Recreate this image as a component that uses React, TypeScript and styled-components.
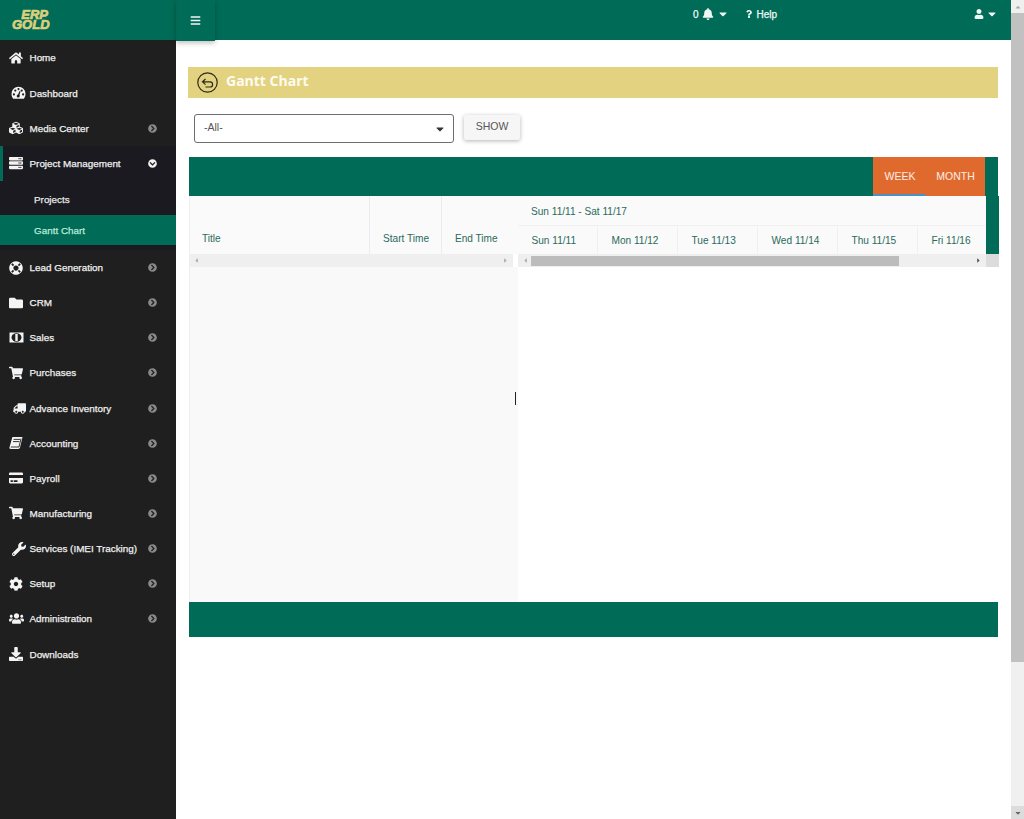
import React from "react";
import styled, { createGlobalStyle } from "styled-components";
import {
  FaHome, FaCubes, FaServer, FaLifeRing, FaFolder, FaShoppingCart,
  FaTruck, FaCreditCard, FaWrench, FaCog, FaUsers, FaDownload, FaChevronCircleRight,
  FaChevronCircleDown, FaBell, FaCaretDown, FaQuestion, FaUser, FaBars, FaCaretLeft, FaCaretRight, FaCaretUp,
} from "react-icons/fa";

const GREEN = "#006b56";
const Global = createGlobalStyle`
  html, body { margin: 0; padding: 0; height: 100%; overflow: hidden; background: #fff; }
  body { font-family: "Liberation Sans", Arial, sans-serif; }
  * { box-sizing: border-box; }
`;
const Page = styled.div`display: flex; width: 1024px; height: 819px; overflow: hidden;`;
const Viewport = styled.div`flex: 1; min-width: 0; display: flex; flex-direction: column;`;
const Header = styled.header`display: flex; height: 40px; background: ${GREEN}; color: #fff; flex: none;`;
const LogoBox = styled.div`width: 176px; flex: none; padding: 10px 0 0 12px;`;
const Logo = styled.div`
  width: 36px; font: italic 900 13px/10px "Liberation Sans", Arial, sans-serif; text-align: right;
  color: #dccf7c; letter-spacing: 0; -webkit-text-stroke: 0.7px #dccf7c;
`;
const Toggle = styled.button`
  width: 39px; height: 41px; border: 0; padding: 0 2px 0 0; background: ${GREEN}; color: #f2f7f5; font-size: 11px;
  display: flex; align-items: center; justify-content: center; box-shadow: 0 2px 5px rgba(0,0,0,.25); position: relative;
  border-left: 1px solid #0a6450;
`;
const HeaderNav = styled.nav`flex: 1; display: flex; align-items: center; padding: 0 13px 12px 478px; font-size: 10px; -webkit-text-stroke: 0.25px #f1f7f5;`;
const NavItem = styled.span`display: inline-flex; align-items: center; gap: ${p => p.$gap ?? 3}px; margin-right: ${p => p.$mr ?? 0}px; color: #f1f7f5;`;
const Spacer = styled.span`flex: 1;`;
const Body = styled.div`flex: 1; display: flex; min-height: 0;`;
const Sidebar = styled.aside`width: 176px; flex: none; background: #1f1f1f; padding-top: 0.3px;`;
const MenuItem = styled.div`
  position: relative; height: 35.15px; display: flex; align-items: center; padding: 0 18px 0 9px; color: #f0f0f0;
  font-size: 9.9px;
  -webkit-text-stroke: 0.25px #f0f0f0;
  background: ${p => p.$open ? "#1a1a20" : "transparent"};
  ${p => p.$open ? `&::before { content: ""; position: absolute; left: 0; top: 0; bottom: 0; width: 3px; background: ${GREEN}; }` : ""}
`;
const IconSlot = styled.span`width: 20.5px; flex: none; display: flex; justify-content: ${p => p.$end ? "flex-end" : "flex-start"}; font-size: 14px; color: #f4f4f4; padding-right: ${p => p.$end ? "3.5px" : 0};`;
const FlippedTruck = styled(FaTruck)`transform: scaleX(-1); font-size: 13px;`;
const Label = styled.span`flex: 1; white-space: nowrap;`;
const Chevron = styled.span`font-size: 9px; display: flex; color: ${p => p.$open ? "#f2f2f2" : "#8a8a8a"}; margin-right: 1px;`;
const SubMenu = styled.div`background: #1a1a20;`;
const SubItem = styled.div`
  height: ${p => p.$h}px; display: flex; align-items: center; padding: ${p => p.$pt}px 0 0 34px; font-size: 9.9px;
  color: ${p => p.$active ? "#b9ead9" : "#e8e8e8"}; background: ${p => p.$active ? GREEN : "transparent"};
  -webkit-text-stroke: 0.25px currentColor;
`;
const SubEnd = styled.div`height: 4.7px; background: #1a1a20;`;
const Main = styled.main`flex: 1; min-width: 0; padding: 27px 13px 0 12px; background: #fff;`;
const TitleBar = styled.div`height: 31px; background: #e3d27f; display: flex; align-items: center; padding-left: 9px; gap: 8px;`;
const Title = styled.h1`margin: -5px 0 0; color: #fdfcf0; font: bold 14px "Open Sans", sans-serif;`;
const Filters = styled.div`display: flex; align-items: flex-start; margin: 16px 0 0 6px; height: 43px; gap: 10px;`;
const Select = styled.div`
  width: 260px; height: 29px; border: 1px solid #6e6e6e; border-radius: 3px; display: flex; align-items: center;
  justify-content: space-between; padding: 0 7px 0 9px; font-size: 10.5px; color: #555;
`;
const SelectText = styled.span`margin-top: -4px;`;
const ShowButton = styled.button`
  width: 56px; height: 25px; margin-top: 1px; border: 0; border-radius: 2px; background: #f6f6f6; color: #555; font: 10.5px "Liberation Sans", sans-serif;
  box-shadow: 0 1px 4px rgba(0,0,0,.3); padding: 0 0 3px;
`;
const Gantt = styled.section`margin: 0 0 0 1px; width: 809px;`;
const Toolbar = styled.div`height: 39px; background: ${GREEN}; display: flex; justify-content: flex-end; padding-right: 13px;`;
const ViewTabs = styled.div`width: 112px; background: #e06a2e; display: flex; color: #fbeee6; font-size: 10.5px;`;
const ViewTab = styled.div`
  width: ${p => p.$w}px; display: flex; align-items: center; justify-content: center; padding-left: ${p => p.$pl ?? 0}px;
  border-bottom: 2px solid ${p => p.$active ? "#4a90c8" : "transparent"};
`;
const Grid = styled.div`display: grid; grid-template-columns: 329px 481px; grid-template-rows: 58px 13px 335px;`;
const LeftHead = styled.div`display: grid; grid-template-columns: 180px 72px 77px; background: #fafafa; border-left: 1px solid #eee;`;
const HeadCell = styled.div`
  display: flex; align-items: flex-end; padding: 0 0 10px ${p => p.$pl ?? 13}px; color: #2a6a5c; font-size: 10.1px; white-space: nowrap;
  border-right: ${p => p.$last ? "0" : "1px solid #ececec"};
`;
const RightHead = styled.div`display: flex; background: #fafafa;`;
const Timeline = styled.div`width: 468px; overflow: hidden; display: flex; flex-direction: column;`;
const GroupRow = styled.div`height: 30px; padding: 1px 13px 0; display: flex; align-items: center; color: #2a6a5c; font-size: 10.1px; border-bottom: 1px solid #f0f0f0;`;
const DayRow = styled.div`flex: 1; display: flex;`;
const DayCell = styled.div`
  width: 80px; flex: none; padding-left: 13.5px; display: flex; align-items: center; color: #2a6a5c; font-size: 10.1px; white-space: nowrap;
  border-right: 1px solid #f0f0f0;
`;
const GreenStrip = styled.div`width: 13px; background: ${GREEN};`;
const ScrollH = styled.div`
  display: flex; align-items: center; justify-content: space-between; background: #efefef; color: ${p => p.$dark ? "#555" : "#aaa"}; font-size: 7px;
  padding: 0 ${p => p.$pr ?? 4}px 0 4px; margin-right: ${p => p.$mr ?? 0}px; position: relative;
`;
const ThumbH = styled.div`position: absolute; left: 13px; top: 2px; width: 368px; height: 10px; background: #bcbcbc;`;
const Corner = styled.div`position: absolute; right: 0; top: 0; bottom: 0; width: 13px; background: #dcdcdc;`;
const LeftPane = styled.div`background: #f9f9f9; border-left: 1px solid #eee; position: relative;`;
const Resizer = styled.div`position: absolute; right: 2px; top: 125px; width: 1px; height: 13px; background: #222;`;
const RightPane = styled.div`background: #fff;`;
const Footer = styled.div`height: 35px; background: ${GREEN};`;
const ScrollV = styled.div`width: 13px; flex: none; background: #f0f0f0; display: flex; flex-direction: column; align-items: stretch;`;
const Arrow = styled.div`height: 13px; display: flex; align-items: center; justify-content: center; font-size: 8px; color: #666; background: ${p => p.$bg ?? "transparent"};`;
const ThumbV = styled.div`height: 649px; background: #c1c1c1;`;
const Fill = styled.div`flex: 1;`;

const GaugeIcon = () => (
  <svg width="15" height="14" viewBox="0 0 15 14">
    <path d="M.5 7.8a7 7 0 1 1 14 0c0 2-.6 3.6-1.6 4.9H2.1C1.1 11.4.5 9.8.5 7.8z" fill="#f4f4f4" />
    <g fill="#1f1f1f">
      <circle cx="2.9" cy="8.4" r="1.1" /><circle cx="4.3" cy="4.6" r="1.1" /><circle cx="7.5" cy="3.1" r="1.1" />
      <circle cx="10.7" cy="4.6" r="1.1" /><circle cx="12.1" cy="8.4" r="1.1" /><circle cx="7.2" cy="10" r="1.5" />
      <path d="M6.6 9.6 8.6 5l.9.3-1.3 5z" />
    </g>
  </svg>
);
const BookIcon = () => (
  <svg width="14" height="14" viewBox="0 0 14 14">
    <path d="M3.4 1H13.5L11 11.6c-.2.8-.7 1.4-1.7 1.4H1.6C.7 13 .2 12.3.5 11.3z" fill="#f4f4f4" />
    <path d="M4.6 3.4h6.4M4 5.6h6.4M1.8 11h8.2l2-8.5" stroke="#1f1f1f" strokeWidth=".9" fill="none" />
  </svg>
);
const MoneyIcon = () => (
  <svg width="15" height="11" viewBox="0 0 15 11">
    <rect x=".5" y=".5" width="14" height="10" fill="#f4f4f4" />
    <ellipse cx="7.5" cy="5.5" rx="5" ry="4.2" fill="#1f1f1f" />
    <rect x="6.3" y="2" width="2.4" height="7" fill="#f4f4f4" />
  </svg>
);

const items1 = [
  { icon: <FaHome />, label: "Home" },
  { icon: <GaugeIcon />, label: "Dashboard", nudge: true },
  { icon: <FaCubes />, label: "Media Center", chev: true },
];
const items2 = [
  { icon: <FaLifeRing />, label: "Lead Generation", chev: true },
  { icon: <FaFolder />, label: "CRM", chev: true },
  { icon: <MoneyIcon />, label: "Sales", chev: true },
  { icon: <FaShoppingCart />, label: "Purchases", chev: true },
  { icon: <FlippedTruck />, label: "Advance Inventory", chev: true, end: true },
  { icon: <BookIcon />, label: "Accounting", chev: true },
  { icon: <FaCreditCard />, label: "Payroll", chev: true },
  { icon: <FaShoppingCart />, label: "Manufacturing", chev: true },
  { icon: <FaWrench />, label: "Services (IMEI Tracking)", chev: true, end: true },
  { icon: <FaCog />, label: "Setup", chev: true },
  { icon: <FaUsers size={15} />, label: "Administration", chev: true },
  { icon: <FaDownload />, label: "Downloads" },
];
const days = ["Sun 11/11", "Mon 11/12", "Tue 11/13", "Wed 11/14", "Thu 11/15", "Fri 11/16"];

function Row({ item }: { item: any }) {
  return (
    <MenuItem>
      <IconSlot $end={item.end || item.nudge}>{item.icon}</IconSlot>
      <Label>{item.label}</Label>
      {item.chev && <Chevron><FaChevronCircleRight /></Chevron>}
    </MenuItem>
  );
}

export default function App() {
  return (
    <Page>
      <Global />
      <Viewport>
        <Header>
          <LogoBox><Logo>ERP GOLD</Logo></LogoBox>
          <Toggle aria-label="menu"><FaBars /></Toggle>
          <HeaderNav>
            <NavItem $mr={16} $gap={3}>0 <FaBell size={12} /><FaCaretDown size={12} /></NavItem>
            <NavItem $gap={4}><FaQuestion size={8} />Help</NavItem>
            <Spacer />
            <NavItem $gap={2}><FaUser size={10} /><FaCaretDown size={12} /></NavItem>
          </HeaderNav>
        </Header>
        <Body>
          <Sidebar>
            {items1.map(i => <Row key={i.label} item={i} />)}
            <MenuItem $open>
              <IconSlot><FaServer /></IconSlot>
              <Label>Project Management</Label>
              <Chevron $open><FaChevronCircleDown /></Chevron>
            </MenuItem>
            <SubMenu>
              <SubItem $h={34.4} $pt={2}>Projects</SubItem>
              <SubItem $h={30} $pt={0} $active>Gantt Chart</SubItem>
              <SubEnd />
            </SubMenu>
            {items2.map(i => <Row key={i.label} item={i} />)}
          </Sidebar>
          <Main>
            <TitleBar>
              <svg width="21" height="21" viewBox="0 0 21 21" fill="none" stroke="#2b2a1c" strokeWidth="1.2">
                <circle cx="10.5" cy="10.5" r="9.7" />
                <path d="M8.5 7 5.5 9.8 8.5 12.6M5.7 9.8H13a2.6 2.6 0 0 1 0 5.2H8.5" />
              </svg>
              <Title>Gantt Chart</Title>
            </TitleBar>
            <Filters>
              <Select><SelectText>-All-</SelectText><FaCaretDown size={12} color="#333" /></Select>
              <ShowButton>SHOW</ShowButton>
            </Filters>
            <Gantt>
              <Toolbar>
                <ViewTabs>
                  <ViewTab $w={53} $pl={1} $active>WEEK</ViewTab>
                  <ViewTab $w={59}>MONTH</ViewTab>
                </ViewTabs>
              </Toolbar>
              <Grid>
                <LeftHead>
                  <HeadCell $pl={12}>Title</HeadCell>
                  <HeadCell>Start Time</HeadCell>
                  <HeadCell $last>End Time</HeadCell>
                </LeftHead>
                <RightHead>
                  <Timeline>
                    <GroupRow>Sun 11/11 - Sat 11/17</GroupRow>
                    <DayRow>{days.map(d => <DayCell key={d}>{d}</DayCell>)}</DayRow>
                  </Timeline>
                  <GreenStrip />
                </RightHead>
                <ScrollH $mr={5}><FaCaretLeft /><FaCaretRight /></ScrollH>
                <ScrollH $dark $pr={17}>
                  <FaCaretLeft color="#aaa" /><ThumbH /><FaCaretRight /><Corner />
                </ScrollH>
                <LeftPane><Resizer /></LeftPane>
                <RightPane />
              </Grid>
              <Footer />
            </Gantt>
          </Main>
        </Body>
      </Viewport>
      <ScrollV>
        <Arrow><FaCaretUp color="#aaa" /></Arrow>
        <ThumbV />
        <Fill />
        <Arrow $bg="#dcdcdc"><FaCaretDown /></Arrow>
      </ScrollV>
    </Page>
  );
}
